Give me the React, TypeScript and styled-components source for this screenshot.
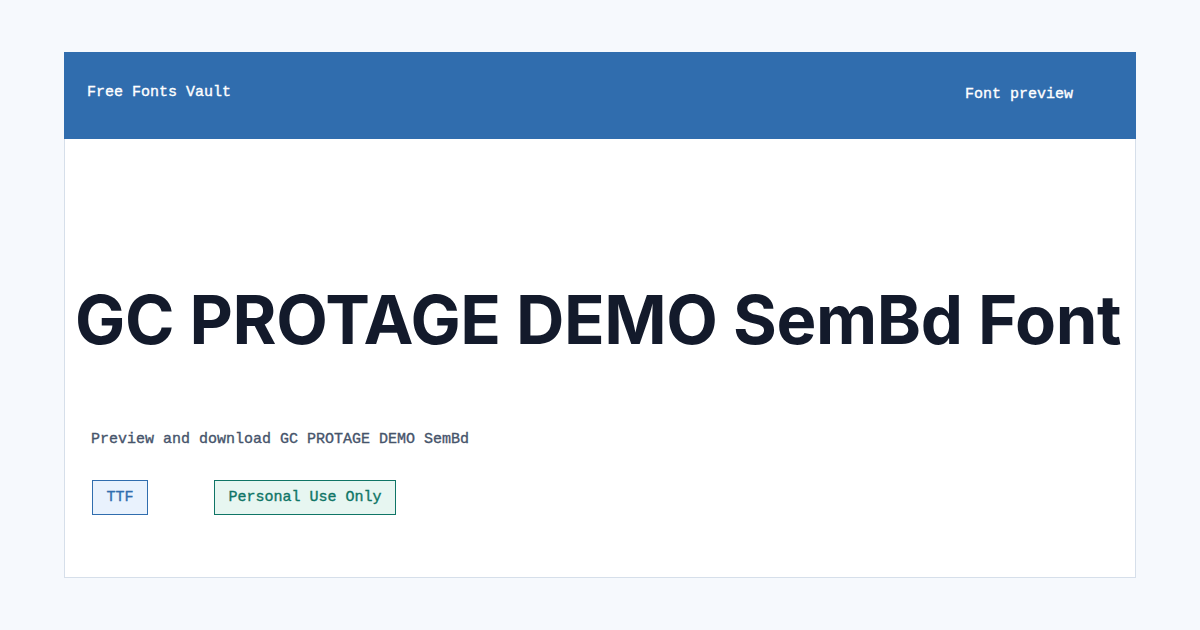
import React from "react";
import styled, { createGlobalStyle } from "styled-components";

const Global = createGlobalStyle`
  html, body { margin: 0; padding: 0; }
  body { background: #f6f9fd; width: 1200px; height: 630px; overflow: hidden; }
`;

const Page = styled.div`
  box-sizing: border-box;
  width: 1200px;
  height: 630px;
  padding: 52px 64px;
`;

const Card = styled.div`
  box-sizing: border-box;
  height: 526px;
  background: #ffffff;
  border: 1px solid #d6dfea;
  display: flex;
  flex-direction: column;
`;

const Header = styled.header`
  box-sizing: border-box;
  height: 87px;
  margin: -1px -1px 0 -1px;
  background: #306dae;
  display: flex;
  align-items: center;
  justify-content: space-between;
  padding: 0 63px 0 23px;
  font-family: "Liberation Mono", monospace;
  font-size: 15px;
  color: #ffffff;
  -webkit-text-stroke: 0.35px currentColor;
`;

const Brand = styled.div`
  margin-top: -6px;
`;

const NavLink = styled.div`
  margin-top: -2px;
`;

const Body = styled.div`
  flex: 1;
  display: flex;
  flex-direction: column;
  padding: 0 26px;
`;

const Title = styled.h1`
  margin: 133px 0 0 -16px;
  font-family: Inter, sans-serif;
  font-weight: 700;
  font-size: 67px;
  line-height: 96px;
  letter-spacing: -0.4px;
  color: #131a2b;
  white-space: nowrap;
`;

const Desc = styled.p`
  margin: 61px 0 0 0;
  font-family: "Liberation Mono", monospace;
  font-size: 15px;
  line-height: 22px;
  color: #46546b;
  -webkit-text-stroke: 0.35px currentColor;
`;

const Tags = styled.div`
  display: flex;
  gap: 66px;
  margin: 29px 0 0 1px;
`;

const Tag = styled.span<{ $tone: "blue" | "green" }>`
  box-sizing: border-box;
  height: 35px;
  display: inline-flex;
  align-items: center;
  padding: 0 13.5px;
  font-family: "Liberation Mono", monospace;
  font-size: 15px;
  -webkit-text-stroke: 0.35px currentColor;
  border: 1px solid ${(p) => (p.$tone === "blue" ? "#306dae" : "#0f7566")};
  background: ${(p) => (p.$tone === "blue" ? "#e9f2fd" : "#e7f6f1")};
  color: ${(p) => (p.$tone === "blue" ? "#306dae" : "#0f7566")};
`;

export default function App() {
  return (
    <>
      <Global />
      <Page>
        <Card>
          <Header>
            <Brand>Free Fonts Vault</Brand>
            <NavLink>Font preview</NavLink>
          </Header>
          <Body>
            <Title>GC PROTAGE DEMO SemBd Font</Title>
            <Desc>Preview and download GC PROTAGE DEMO SemBd</Desc>
            <Tags>
              <Tag $tone="blue">TTF</Tag>
              <Tag $tone="green">Personal Use Only</Tag>
            </Tags>
          </Body>
        </Card>
      </Page>
    </>
  );
}
